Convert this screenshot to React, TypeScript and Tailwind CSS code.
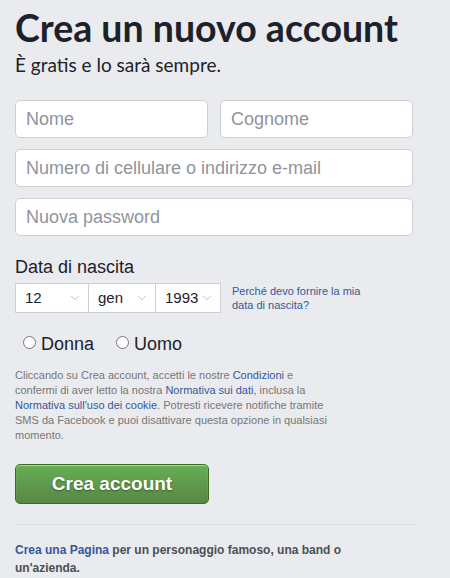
import { ChevronDown } from "lucide-react";

const arial = "font-['Liberation_Sans',Arial,sans-serif]";

function Field({ placeholder, className = "" }: { placeholder: string; className?: string }) {
  return (
    <div
      className={`flex h-[38px] items-center rounded-[5px] border border-[#ccd0d5] bg-white px-[10px] text-[18px] text-[#90949c] ${className}`}
    >
      {placeholder}
    </div>
  );
}

function Select({ value, width }: { value: string; width: string }) {
  return (
    <div
      className={`flex h-[30px] items-center justify-between border border-[#ccd0d5] bg-white pl-[9px] pr-[6px] text-[15px] text-[#1d2129] ${width}`}
    >
      <span>{value}</span>
      <ChevronDown size={14} strokeWidth={1} className="shrink-0 text-[#8d949e]" />
    </div>
  );
}

function Radio({ label }: { label: string }) {
  return (
    <label className="flex items-center gap-[5px] text-[18px] text-[#1d2129]">
      <span className="mb-[5px] h-[13px] w-[13px] rounded-full border border-[#767676] bg-white" />
      {label}
    </label>
  );
}

export default function App() {
  return (
    <main className={`min-h-[578px] w-[450px] bg-[#e9ebee] ${arial}`}>
      <div className="w-[413px] pl-[15px] pt-[4px]">
        <h1 className="font-['Lato',sans-serif] text-[37.5px] font-bold leading-[48px] text-[#1d2129]">
          Crea un nuovo account
        </h1>
        <p className="font-['Lato',sans-serif] text-[19px] leading-[26px] text-[#1d2129]">
          È gratis e lo sarà sempre.
        </p>

        <div className="mt-[22px] flex flex-col gap-[11px]">
          <div className="flex gap-[12px]">
            <Field placeholder="Nome" className="flex-1" />
            <Field placeholder="Cognome" className="flex-1" />
          </div>
          <Field placeholder="Numero di cellulare o indirizzo e-mail" />
          <Field placeholder="Nuova password" />
        </div>

        <div className="mt-[20px] text-[18px] leading-[22px] text-[#1d2129]">Data di nascita</div>
        <div className="mt-[5px] flex items-center">
          <Select value="12" width="w-[74px]" />
          <Select value="gen" width="w-[67px] border-l-0" />
          <Select value="1993" width="w-[65px] border-l-0" />
          <a className="ml-[11px] w-[140px] text-[11px] leading-[14px] text-[#365899]">
            Perché devo fornire la mia data di nascita?
          </a>
        </div>

        <div className="mt-[18px] flex items-center gap-[22px] pl-[8px]">
          <Radio label="Donna" />
          <Radio label="Uomo" />
        </div>

        <p className="mt-[10px] w-[320px] text-[11px] leading-[15px] text-[#777777]">
          Cliccando su Crea account, accetti le nostre <a className="text-[#365899]">Condizioni</a> e
          confermi di aver letto la nostra <a className="text-[#365899]">Normativa sui dati</a>, inclusa la{" "}
          <a className="text-[#365899]">Normativa sull'uso dei cookie</a>. Potresti ricevere notifiche tramite
          SMS da Facebook e puoi disattivare questa opzione in qualsiasi momento.
        </p>

        <button className="mt-[21px] h-[40px] w-[194px] rounded-[5px] border border-[#3b6e22] bg-[linear-gradient(#67ae55,#578843)] text-[19px] font-bold text-white shadow-[inset_0_1px_1px_#a4e388] [text-shadow:0_1px_2px_rgba(0,0,0,0.4)]">
          Crea account
        </button>

        <div className="mt-[20px] h-px w-[400px] bg-[#dadde1]" />

        <p className="mt-[16px] text-[12px] font-bold leading-[18px] text-[#4b4f56]">
          <a className="text-[#365899]">Crea una Pagina</a> per un personaggio famoso, una band o
          <br />
          un'azienda.
        </p>
      </div>
    </main>
  );
}
